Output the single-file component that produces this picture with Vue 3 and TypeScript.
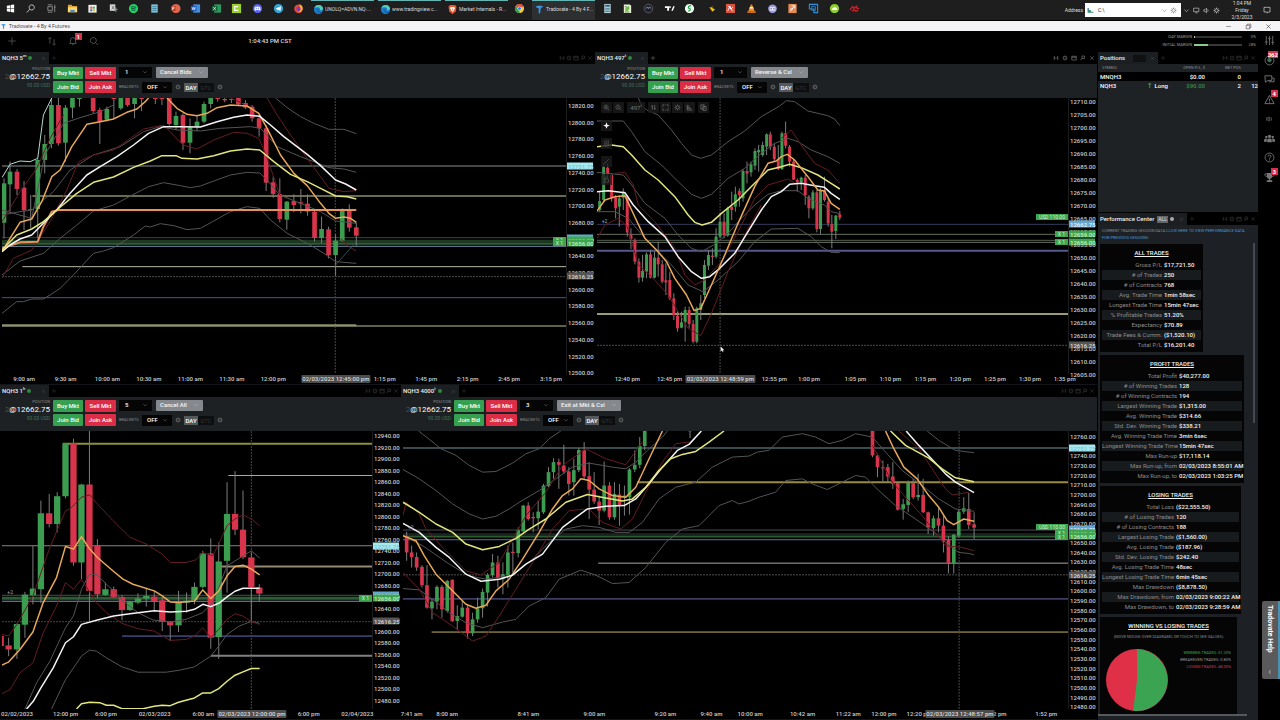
<script setup lang="ts">
import { h, ref } from 'vue'

type Shape = [d: string, fill: string, stroke?: string, width?: number]
type Candle = [x: number, high: number, top: number, bottom: number, low: number, up: number]
interface Level { y: number; from?: number; color: string; w?: number; dash?: boolean }
interface Curve { c: string; p: string }
interface Tag { y: number; text: string; kind: string }
interface Chart {
  id: string; interval: string; unit: string; qty: string; action: string; active: boolean; bright: boolean
  box: [number, number, number, number]; candleW: number
  prices: { start: number; step: number; count: number; y0: number; dy: number }
  times: [number, string][]; cross: [number, string]; tags: Tag[]; orders: Tag[]
  levels: Level[]; curves: Curve[]; candles: Candle[]; mark?: [number, number]
}

const icons: Record<string, Shape[]> = {
  start: [['M2 3l3.6-.6v3.3H2zM6.2 2.3L10 1.7v4H6.2zM2 6.4h3.6v3.3L2 9.1zM6.2 6.4H10v4l-3.8-.6z', '#fff']],
  search: [['M7.3 2a2.8 2.8 0 1 0 .1 0zM5.2 6.8L2 10.4', 'none', '#ccc', 1]],
  taskview: [['M2 4h5v4H2zM2 2h5M2 10h5M9.5 2v8M9 4.5h1.4', 'none', '#aaa', 0.8]],
  folder: [['M1 2h4l1 1.4h5V10H1z', '#e0a030'], ['M1 4.6h10V10H1z', '#ffd76a'], ['M3.5 7.5h5V10h-5z', '#4a90d0']],
  store: [['M1.5 2h9v8.5h-9z', '#eee'], ['M3.5 4h2.2v2.2H3.5z', '#e55'], ['M6.3 4h2.2v2.2H6.3z', '#4a4'], ['M3.5 6.8h2.2V9H3.5z', '#37c'], ['M6.3 6.8h2.2V9H6.3z', '#db3']],
  snip: [['M2 1.5h6v7H2z', '#ddd'], ['M4 3l3 4M7 3L4 7', 'none', '#555', 0.8], ['M7 7h3.5M8.5 5v5', 'none', '#7ab', 1]],
  spotify: [['M6 1a5 5 0 1 0 .01 0z', '#1ed760'], ['M3 4.5q3-1.2 6 .4M3.4 6.3q2.6-1 5 .4M3.8 8q2.2-.8 4 .3', 'none', '#123', 0.8]],
  notes: [['M2.5 1.5h7v9h-7z', '#7cc4dc'], ['M3.7 4h4.6M3.7 6h4.6M3.7 8h4.6', 'none', '#24607a', 0.7]],
  ppt: [['M6.5 1a5 5 0 1 0 .01 0z', '#e0654a'], ['M1 3.5h5v5H1z', '#b5391f'], ['M2.8 7.6V4.4h1q1 0 1 .9t-1 .9h-1', 'none', '#fff', 0.7]],
  word: [['M3.5 1.5H11v9H3.5z', '#3f8fe0'], ['M1 3.2h6v5.6H1z', '#1b55b0'], ['M2.2 4.5l.9 3 1-3 1 3 .8-3', 'none', '#fff', 0.7]],
  excel: [['M3.5 1.5H11v9H3.5z', '#2f9a5e'], ['M1 3.2h6v5.6H1z', '#15633a'], ['M2.6 4.5l2.6 3M5.2 4.5l-2.6 3', 'none', '#fff', 0.8]],
  camtasia: [['M1 1h10v10H1z', '#9bd32a'], ['M8 4H4v4h4', 'none', '#fff', 1.3]],
  discord: [['M6 1a5 5 0 1 0 .01 0z', '#5865f2'], ['M3.2 4.4q2.8-1 5.6 0l.6 3.2-1.6.8-.6-.8H4.8l-.6.8-1.6-.8z', '#fff'], ['M4.9 5.3v1.2M7.1 5.3v1.2', 'none', '#5865f2', 0.8]],
  telegram: [['M6 1a5 5 0 1 0 .01 0z', '#30a5dd'], ['M2.8 6L9 3.5 8 8.8 5.8 7.3 4.8 8.3 4.6 6.7z', '#fff']],
  firefox: [['M6 1.5a4.7 4.7 0 1 0 .01 0z', '#e8492a'], ['M7 1q4 1.6 3.4 6Q9 10.5 6 10.3 9 8 7.6 5z', '#ffb52e'], ['M6 4.2a2.2 2.2 0 1 0 .01 0z', '#7a3cc8']],
  edge: [['M6 1a5 5 0 1 0 .01 0z', '#1d78c8'], ['M1.4 5Q2 1.2 6 1q4.6.2 5 4.2-.2 2-3.4 2 .8-3.6-2.6-3.6Q2 3.6 1.4 5z', '#4fd0b8'], ['M5 6q-.4 3 4 3.4', 'none', '#0c4a90', 0.8]],
  brave: [['M3.2 1h5.6L10.4 3 9.6 8 6 11.2 2.4 8 1.6 3z', '#f0552b'], ['M4 3.4h4l.5 1.4L7.3 7 6 8.6 4.7 7 3.5 4.8z', '#fff'], ['M6 5v2', 'none', '#f0552b', 0.8]],
  chrome: [['M6 1a5 5 0 1 0 .01 0z', '#f2c230'], ['M6 6L1.7 3.5A5 5 0 0 1 10.3 3.5z', '#e04a3a'], ['M6 6L1.7 3.5A5 5 0 0 0 6 11z', '#2f9e50'], ['M6 3.7a2.3 2.3 0 1 0 .01 0z', '#fff'], ['M6 4.3a1.7 1.7 0 1 0 .01 0z', '#3a7be0']],
  tradovate: [['M2 2.5L6 1.5 10 2.5 8.5 4H7.5L6.5 11 5 9.5 5.2 4.5 3 4z', '#3a95e0']],
  calc: [['M2.5 1h7v10h-7z', '#b9d4dc'], ['M3.5 2h5v2h-5z', '#2a5a74'], ['M3.5 5.8h5M3.5 7.5h5M3.5 9.3h5', 'none', '#3a7088', 0.9]],
  npp: [['M2 1.5h6.5L10 3v8H2z', '#e6f0d8'], ['M3.5 8.5Q3 4 7.5 3.5 9.5 6 6 8.8z', '#6cbf3a'], ['M3 4h2M3 9.8h5', 'none', '#333', 0.7]],
  obs: [['M6 1.3a4.7 4.7 0 1 0 .01 0z', '#20202e', '#778', 0.7], ['M3.5 6a1.2 1.2 0 1 1 2.4 0 1.2 1.2 0 1 1 2.6 0', 'none', '#99a', 1]],
  tv: [['M1 3.5h4.5v5H3.5v-3H1zM6.5 3.5a1 1 0 1 0 .01 0zM8 8.5l2-5h1.7l-2 5z', '#fff']],
  spark: [['M6 1a5 5 0 1 0 .01 0z', '#f3fff5'], ['M7.5 3Q4 3.2 5 5.5 7.5 6 6.5 8.2L4.5 9', 'none', '#2ca84c', 1.4]],
  bird: [['M4.5 4.5L7 5 8 3v2.5L11 7 8 9.5 6.5 7z', '#f0c020']],
  trello: [['M1 1h10v10H1z', '#d85440'], ['M3 8.5l2.5-5 1 3 2-2M3.5 3l5 6', 'none', '#fff', 1]],
  vlc: [['M5.3 1.5h1.4L9.5 9h-7z', '#f08a24'], ['M4.3 4.3h3.4l.6 1.7H3.7z', '#fff'], ['M1.5 9h9v1.8h-9z', '#e07818']],
  bot: [['M6 1.5a4.7 4.7 0 1 0 .01 0z', '#9a9ae0'], ['M3 4.5h6v3.8H3z', '#eef'], ['M4.5 5.5v1.5M7.5 5.5v1.5', 'none', '#447', 1]],
  pdf: [['M1.5 1h9v10h-9z', '#e88a50'], ['M3.5 9L8 3.5M5 3h3.5v3M3.5 6.5h3', 'none', '#fff', 1]],
  vbox: [['M1.5 1.5h9v9h-4v-4h-5z', 'none', '#2f8fd8', 1.2], ['M4 4h4v4H4z', 'none', '#2f8fd8', 0.9]],
  cloud: [['M6 1a5 5 0 1 0 .01 0z', '#8fd02c'], ['M3.2 7.5h5.6q.8-1.500-1-2-1.500-2.500-3.200 0-1.800.2-1.400 2z', '#fff']],
  redx: [['M1 7.5L4 4l1.5 2L8 3.5l1 2.5h2M3 8.5l2.5-1 2 1.5L10 8', 'none', '#c8202c', 1.5]],
  plus: [['M6 1.5v9M1.5 6h9', 'none', 'currentColor', 0.9]],
  arrows: [['M3.5 9V2M1.7 3.8L3.5 2l1.8 1.8M8.5 4v7M6.7 9.2L8.5 11l1.8-1.8', 'none', 'currentColor', 0.9]],
  bell: [['M2 9h8L9 7.5V5a3 3 0 0 0-6 0v2.5zM5 10.5h2', 'none', 'currentColor', 1]],
  lens: [['M5.2 1.8a3.6 3.6 0 1 0 .01 0zM7.8 8l3 3', 'none', 'currentColor', 1]],
  cog: [['M6 3.2a2.8 2.8 0 1 0 .01 0zM6 1v2.2M6 8.8V11M1 6h2.2M8.8 6H11M2.5 2.5L4 4M8 8l1.5 1.5M9.5 2.5L8 4M4 8L2.500 9.500', 'none', 'currentColor', 1.2]],
  chev: [['M2.5 4.5L6 8l3.5-3.5', 'none', 'currentColor', 1]],
  close: [['M2.5 2.5l7 7M9.5 2.5l-7 7', 'none', 'currentColor', 1]],
  link: [['M2.5 2v8M9.5 2v8M2.5 6h3M6.5 6h3', 'none', 'currentColor', 1.2]],
  win: [['M1.5 2.5h9V10h-9zM1.5 4.5h9', 'none', 'currentColor', 1.2]],
  pin: [['M4 2h5v5H4zM4 7L1.5 10.5', 'none', 'currentColor', 1.2]],
  mini: [['M2 6h8', 'none', 'currentColor', 0.8]],
  restore: [['M2 4h6v6H2zM4 4V2h6v6H8', 'none', 'currentColor', 0.9]],
  sliders: [['M2.5 1v10M6 1v10M9.5 1v10M1 7.5h3M4.5 4h3M8 8h3', 'none', 'currentColor', 0.9]],
  globe: [['M6 1.2a4.8 4.8 0 1 0 .01 0z', 'none', 'currentColor', 1], ['M6 3.2a2.4 2.4 0 1 0 .01 0z', '#3a7050']],
  chat: [['M1 2h7.5v5H4L1.5 9zM5 8.5h6V4.5H9', 'none', 'currentColor', 1]],
  warn: [['M6 1.5L11 10.5H1zM6 5v3M6 8.8v.8', 'none', 'currentColor', 1]],
  ladder: [['M2.5 3.5v5M4.5 3.5H7v5H4.5zM9.5 3.5v5', 'none', 'currentColor', 1]],
  people: [['M6 2a1.7 1.7 0 1 0 .01 0zM2.5 3a1.3 1.3 0 1 0 .01 0zM9.5 3a1.3 1.3 0 1 0 .01 0zM3.5 10V7.5Q3.5 6 6 6t2.5 1.5V10zM0 9.5V7.5Q.5 6 3 6v3.5zM12 9.5V7.5Q11.5 6 9 6v3.5z', 'currentColor']],
  help: [['M6 1.2a4.8 4.8 0 1 0 .01 0zM4.4 4.8Q4.6 3.3 6 3.3t1.6 1.4Q7.6 5.6 6 6.5v.8M6 8.3v.9', 'none', 'currentColor', 1]],
  trophy: [['M3 1h6v3.5Q9 7 6.7 7.3V9H9v2H3V9h2.3V7.3Q3 7 3 4.5z', 'currentColor'], ['M3 2H1v1.5Q1.5 5 3 5M9 2h2v1.5Q10.5 5 9 5', 'none', 'currentColor', 0.9]],
  zoomin: [['M5.2 1.8a3.6 3.6 0 1 0 .01 0zM7.8 8l3 3M3.5 5.4h3.4M5.2 3.7v3.4', 'none', 'currentColor', 1]],
  zoomout: [['M5.2 1.8a3.6 3.6 0 1 0 .01 0zM7.8 8l3 3M3.5 5.4h3.4', 'none', 'currentColor', 1]],
  bars: [['M4 2v8M2 4h2M8 2v8M8 8h2', 'none', 'currentColor', 1.2]],
  frame: [['M1.5 4V1.5H4M8 1.5h2.5V4M10.5 8v2.5H8M4 10.5H1.5V8M1.5 5.5v1M10.5 5.5v1M5.5 1.5h1M5.5 10.5h1', 'none', 'currentColor', 1.2]],
  depth: [['M2 1.5v9M2 3h3M2 5.5h5M2 8h7M2 10.5h9', 'none', 'currentColor', 1.2]],
  copy: [['M1.5 1.5H7v7H1.5zM5 4h5.5v7H5z', 'none', 'currentColor', 1.2]],
  move: [['M6 .5l1.5 4 4 1.5-4 1.5-1.5 4-1.5-4-4-1.500 4-1.500z', 'currentColor']],
  page: [['M2.5 1.5h7v9h-7zM4 4h4M4 6h4M4 8h4', 'none', 'currentColor', 1]],
  line: [['M2 10l8-8', 'none', 'currentColor', 1.2]],
  lock: [['M2.5 5.5h7v5h-7zM4 5.5V3q2-2.5 4 0', 'none', 'currentColor', 1.2]],
  monitor: [['M1 2h9v6H1zM4 10h4', 'none', 'currentColor', 1]],
  sound: [['M1.5 4.5h2L6 2v8L3.5 7.5h-2zM8 4q1.500 2 0 4', 'none', 'currentColor', 1]],
  drive: [['M1 5h5l1 3h4v2H1z', '#3a8a78'], ['M1 1.5h2v4H1z', '#2a6ab0']],
  note: [['M1.5 2h9v7H8l-1.5 1.700V9h-5z', 'none', 'currentColor', 1]],
}

const Ico = (p: { n: string }) =>
  h('svg', { viewBox: '0 0 12 12', class: 'ico', 'aria-hidden': 'true' },
    (icons[p.n] ?? []).map(([d, fill, stroke, w]) =>
      h('path', { d, fill, stroke: stroke ?? 'none', 'stroke-width': w ?? 0 })))
Ico.props = ['n']

const pinned = ['start', 'search', 'taskview', 'folder', 'store', 'snip', 'spotify', 'notes', 'ppt', 'word', 'excel', 'camtasia', 'discord', 'telegram', 'firefox']
const running = ['calc', 'npp', 'obs', 'tv', 'spark', 'bird', 'trello', 'vlc', 'bot', 'pdf', 'vbox', 'cloud', 'redx']
const panelTools = ['link', 'cog', 'win', 'pin', 'close']
const chartTools = ['zoomin', 'zoomout', '', 'bars', 'frame', 'cog', 'depth', 'copy']
const sideTools = ['move', 'page', 'line', 'lock']
const rail: [string, string][] = [['sliders', ''], ['globe', '362'], ['chat', ''], ['warn', '4'], ['ladder', ''], ['people', ''], ['help', ''], ['trophy', '3']]

const cyan = { text: '12751.75', kind: 'cyan' }
const charts: Chart[] = [
  {
    id: 'a', interval: '5', unit: 'm', qty: '1', action: 'Cancel Bids', active: false, bright: false,
    box: [6, 9, 1689, 828], candleW: 14,
    prices: { start: 12820, step: 20, count: 17, y0: 30, dy: 50.1 },
    times: [[72, '9:00 am'], [196, '9:30 am'], [321, '10:00 am'], [445, '10:30 am'], [569, '11:00 am'], [693, '11:30 am'], [817, '12:00 pm'], [1150, '1:15 pm'], [1274, '1:45 pm'], [1398, '2:15 pm'], [1522, '2:45 pm'], [1647, '3:15 pm']],
    cross: [1004, '02/03/2023 12:45:00 pm'],
    tags: [{ ...cyan, y: 212 }, { y: 428, text: '12662.75', kind: 'blue' }, { y: 436, text: '12659.00', kind: 'green' }, { y: 445, text: '12656.00', kind: 'green' }, { y: 543, text: '12616.25', kind: 'gray' }],
    orders: [{ y: 436, text: 'X 1', kind: 'green' }, { y: 445, text: 'X 1', kind: 'green' }],
    levels: [
      { y: 213, color: '#8a9090' }, { y: 303, from: 97, color: '#d4d8a0' }, { y: 428, color: '#3c4448' },
      { y: 440, color: '#1c3a20', w: 4 }, { y: 447, color: '#4c8a55' }, { y: 454, color: '#7088a8' },
      { y: 515, from: 67, color: '#b8b8a8' }, { y: 545, color: '#4a4a4a', dash: true }, { y: 608, color: '#46558c' }, { y: 693, color: '#c0c488' },
    ],
    curves: [
      { c: 'dim', p: '825,9 860,38 900,65 940,85 985,103 1030,103 1067,116' },
      { c: 'dim', p: '6,540 60,498 130,475 180,430 230,390 280,348 340,330 400,298 445,275 490,263 540,272 570,278 600,273 640,258 690,240 740,232 778,234 800,255 838,300 900,325 960,350 1005,378 1067,385' },
      { c: 'dim', p: '6,655 50,620 70,620 95,612 130,612 150,600 180,580 215,545 280,475 310,468 340,458 400,420 435,393 450,396 480,386 520,392 560,404 600,400 640,378 690,350 740,335 778,340 810,375 860,415 920,445 970,475 1005,500 1067,505' },
      { c: 'dim', p: '6,360 60,350 95,345 160,290 210,225 280,180 360,155 430,110 480,95 530,105 600,108 660,100 750,95 780,100 830,155 900,185 940,200 985,218 1030,222 1067,232' },
      { c: 'dim', p: '6,345 40,355 95,370 134,180 190,85 240,68 300,50 340,30' },
      { c: 'red', p: '6,550 40,490 95,465 150,380 200,285 235,200 280,180 340,165 430,102 490,90 548,150 590,162 640,135 700,112 740,115 775,130 797,180 838,300' },
      { c: 'red', p: '6,380 60,290 110,220 150,130 190,60' },
      { c: 'red', p: '800,9 830,60 870,120 920,190 960,245 985,280 1030,290 1067,287' },
      { c: 'red', p: '690,9 720,22 760,45' }, { c: 'red', p: '1020,430 1045,455 1067,468' },
      { c: 'teal', p: '1005,510 1067,440' },
      { c: 'ice', p: '6,248 30,208 60,198 90,200 113,190 130,60 155,9' },
      { c: 'coral', p: '6,460 60,442 113,440 130,395 155,350 175,345 1067,345' },
      { c: 'olive', p: '6,691 1067,691' },
      { c: 'orange', p: '6,470 30,430 60,382 95,372 125,320 155,245 180,225 215,155 260,88 300,80 340,72 380,52 410,42 435,20 445,9' },
      { c: 'orange', p: '500,9 530,40 560,58 590,62 620,55 650,38 690,30 740,33 775,55 800,100 840,180 880,235 920,272 960,325 985,355 1005,370 1030,366 1050,370 1067,382' },
      { c: 'white', p: '6,470 30,450 60,432 95,420 130,385 170,345 210,295 260,240 300,215 350,185 400,150 445,115 490,95 540,95 600,96 650,80 700,67 740,60 778,64 810,90 850,125 920,178 960,212 1005,255 1035,267 1067,285' },
      { c: 'yellow', p: '6,465 50,420 95,402 130,380 170,345 230,295 280,262 340,246 400,217 450,198 485,182 527,182 545,190 590,192 640,182 690,168 740,162 778,165 820,200 870,238 920,260 960,280 1005,303 1040,305 1067,312' },
    ],
    candles: [
      [12, 250, 265, 383, 430, 1], [30, 200, 230, 268, 350, 1], [51, 222, 230, 282, 300, 0], [72, 258, 278, 346, 405, 0], [92, 300, 342, 345, 400, 0], [113, 190, 195, 342, 430, 1], [134, 120, 147, 195, 235, 1], [154, 9, 30, 147, 160, 1], [175, 9, 30, 145, 152, 0], [196, 30, 38, 143, 200, 1], [217, 9, 9, 38, 70, 1], [238, 9, 9, 12, 35, 1],
      [279, 9, 9, 48, 55, 0], [299, 38, 45, 80, 147, 0], [320, 35, 42, 74, 80, 1], [341, 9, 9, 12, 70, 0], [362, 9, 9, 40, 45, 1], [382, 9, 9, 30, 35, 0], [403, 9, 9, 27, 70, 1], [424, 9, 9, 12, 48, 0], [465, 9, 9, 12, 27, 0], [485, 9, 9, 12, 30, 0], [507, 9, 9, 87, 92, 0], [527, 50, 63, 90, 105, 1], [548, 55, 60, 143, 165, 0], [569, 70, 97, 143, 175, 1], [590, 60, 80, 95, 108, 1], [611, 20, 27, 80, 85, 1], [631, 9, 9, 27, 40, 1],
      [652, 9, 9, 12, 20, 0], [673, 9, 12, 16, 22, 0], [693, 9, 12, 15, 24, 0], [714, 9, 9, 28, 32, 0], [735, 15, 24, 38, 42, 0], [755, 30, 35, 70, 80, 0], [776, 60, 70, 100, 125, 0], [797, 90, 100, 263, 288, 0], [818, 245, 262, 297, 308, 0], [838, 250, 297, 372, 382, 0], [859, 318, 320, 374, 404, 1], [880, 298, 318, 330, 352, 0], [901, 282, 322, 326, 355, 0], [921, 298, 326, 350, 362, 0], [942, 345, 350, 429, 440, 0], [963, 365, 402, 429, 445, 1], [984, 395, 403, 480, 490, 0], [1005, 418, 437, 480, 542, 1], [1025, 340, 345, 437, 440, 1], [1046, 328, 345, 398, 410, 0], [1067, 383, 397, 422, 452, 0],
    ],
  },
  {
    id: 'b', interval: '497', unit: 't', qty: '1', action: 'Reverse & Cxl', active: true, bright: true,
    box: [6, 9, 1416, 828], candleW: 9,
    prices: { start: 12710, step: 5, count: 22, y0: 17, dy: 39 },
    times: [[97, '12:40 pm'], [224, '12:45 pm'], [538, '12:55 pm'], [642, '1:00 pm'], [781, '1:05 pm'], [886, '1:10 pm'], [991, '1:15 pm'], [1096, '1:20 pm'], [1200, '1:25 pm'], [1305, '1:30 pm'], [1409, '1:35 pm']],
    cross: [376, '02/03/2023 12:48:59 pm'],
    tags: [{ y: 387, text: '12662.75', kind: 'blue' }, { y: 417, text: '12659.00', kind: 'green' }, { y: 440, text: '12656.00', kind: 'green' }, { y: 750, text: '12616.25', kind: 'gray' }],
    orders: [{ y: 366, text: 'USD 110.00', kind: 'green' }, { y: 417, text: 'X 1', kind: 'green' }, { y: 440, text: 'X 1', kind: 'green' }],
    levels: [
      { y: 388, color: '#343c5c' }, { y: 418, color: '#666e60' }, { y: 436, color: '#566050' }, { y: 442, color: '#6a7464' },
      { y: 467, color: '#54588c', w: 2 }, { y: 657, color: '#9c9c74', w: 2 }, { y: 751, color: '#4a4a4a', dash: true },
    ],
    curves: [
      { c: 'dim', p: '130,9 140,30 155,45 190,60 230,105 260,145 290,180 318,190 350,180 400,140 450,108 500,65 555,33 575,17 600,20 640,48 700,62 720,72 736,92' },
      { c: 'dim', p: '6,78 85,78 110,110 150,170 200,210 250,260 290,298 320,310 350,298 400,250 450,220 500,175 540,145 580,130 610,140 650,165 700,185 736,205' },
      { c: 'dim', p: '6,232 85,240 110,270 150,325 210,370 250,420 290,460 320,470 360,448 400,415 440,370 480,330 520,298 560,287 610,287 640,310 690,330 710,350 736,356' },
      { c: 'dim', p: '6,350 60,350 100,370 150,430 230,510 280,570 325,590 370,555 430,500 480,440 530,402 610,400 650,425 680,455 710,472 736,473' },
      { c: 'red', p: '60,235 90,232 115,270 130,330 180,380 240,460 270,540 300,570 330,555 380,500 430,410 480,310 520,270 580,252 610,270' },
      { c: 'red', p: '6,430 30,390 70,370 97,395 130,510 170,545 220,600 280,700 318,722 350,655 400,530 450,420 500,330' },
      { c: 'red', p: '560,130 590,105 620,150 660,205 700,225 736,265' },
      { c: 'yellow', p: '6,155 50,150 85,155 110,180 150,225 190,255 240,305 280,360 300,382 322,390 350,382 380,355 430,315 480,265 520,225 560,215 585,208 620,218 670,240 705,262 736,282' },
      { c: 'white', p: '6,290 40,287 90,293 115,330 160,380 210,425 250,485 290,530 320,550 345,545 375,520 420,475 460,410 500,345 530,305 560,290 585,268 620,265 660,272 690,277 710,295 736,313' },
      { c: 'orange', p: '6,348 30,315 60,305 90,302 110,345 150,430 185,465 215,500 240,550 275,600 298,647 318,640 350,570 390,480 430,385 480,275 520,205 545,198 560,185 578,178 600,195 640,245 670,285 690,288 710,325 736,343' },
    ],
    candles: [
      [14, 290, 318, 345, 350, 1], [26, 205, 215, 315, 320, 1], [38, 205, 218, 235, 250, 0], [50, 235, 240, 310, 320, 0], [62, 300, 308, 340, 370, 0], [73, 300, 310, 335, 395, 1], [85, 280, 290, 308, 345, 1], [97, 300, 305, 412, 425, 0], [108, 400, 418, 432, 462, 0], [120, 430, 436, 500, 508, 0], [132, 490, 500, 548, 563, 0], [143, 480, 528, 548, 560, 1], [155, 472, 478, 530, 550, 1], [167, 465, 478, 548, 550, 0], [179, 470, 488, 548, 550, 1], [190, 440, 488, 508, 545, 0], [202, 495, 508, 560, 565, 0], [213, 505, 556, 562, 600, 0], [225, 530, 555, 610, 615, 0],
      [237, 595, 610, 660, 675, 0], [248, 650, 662, 700, 710, 0], [260, 650, 682, 698, 700, 1], [271, 635, 645, 682, 740, 1], [283, 635, 645, 687, 700, 0], [295, 675, 687, 740, 745, 0], [306, 635, 640, 740, 745, 1], [318, 600, 625, 645, 675, 1], [329, 495, 510, 600, 610, 1], [341, 465, 480, 512, 525, 1], [353, 460, 482, 486, 510, 0], [364, 400, 425, 485, 490, 1], [376, 355, 380, 425, 430, 1], [388, 355, 380, 420, 430, 0], [399, 335, 340, 422, 425, 1], [411, 290, 335, 345, 375, 0], [422, 275, 298, 335, 350, 1], [434, 280, 288, 300, 335, 0], [445, 222, 228, 310, 320, 1], [457, 200, 228, 236, 265, 0], [469, 200, 208, 232, 245, 1],
      [481, 160, 168, 212, 225, 1], [492, 150, 165, 172, 230, 1], [504, 140, 150, 180, 185, 1], [516, 115, 118, 155, 180, 1], [527, 110, 118, 155, 165, 0], [539, 145, 155, 192, 200, 0], [551, 150, 192, 222, 225, 0], [562, 110, 115, 222, 225, 1], [573, 80, 115, 152, 160, 0], [585, 150, 155, 200, 215, 0], [597, 190, 200, 254, 255, 0], [608, 250, 255, 262, 290, 0], [620, 245, 248, 262, 285, 1], [632, 240, 248, 300, 330, 0], [643, 300, 305, 340, 370, 0], [655, 285, 292, 340, 345, 1], [667, 285, 292, 402, 412, 0], [678, 280, 288, 402, 418, 1], [690, 245, 285, 315, 320, 0], [701, 310, 320, 385, 395, 0], [712, 360, 388, 410, 460, 0], [724, 360, 362, 408, 432, 1], [736, 348, 358, 368, 375, 0],
    ],
    mark: [20, 378],
  },
  {
    id: 'c', interval: '1', unit: 'h', qty: '5', action: 'Cancel All', active: false, bright: false,
    box: [6, 147, 1113, 831], candleW: 19,
    prices: { start: 12940, step: 20, count: 24, y0: 160, dy: 34.35 },
    times: [[51, '02/02/2023'], [197, '12:00 pm'], [318, '6:00 pm'], [464, '02/03/2023'], [610, '6:00 am'], [926, '6:00 pm'], [1072, '02/04/2023']],
    cross: [756, '02/03/2023 12:00:00 pm'],
    tags: [{ ...cyan, y: 490 }, { y: 636, text: '12662.75', kind: 'blue' }, { y: 647, text: '12656.00', kind: 'green' }, { y: 716, text: '12616.25', kind: 'gray' }],
    orders: [{ y: 647, text: 'X 1', kind: 'green' }],
    levels: [
      { y: 185, from: 190, color: '#8c9038', w: 2 }, { y: 280, from: 687, color: '#a8a8a8' }, { y: 490, color: '#808888' }, { y: 552, from: 665, color: '#948a78', w: 2 },
      { y: 638, color: '#3a5a50' }, { y: 647, color: '#2c5c34', w: 3 }, { y: 656, color: '#7890a8' }, { y: 717, color: '#444', dash: true }, { y: 760, from: 367, color: '#6070b8' }, { y: 819, from: 634, color: '#808080', w: 2 },
    ],
    curves: [
      { c: 'dim', p: '155,978 197,890 245,820 269,802 290,805 320,825 367,852 415,868 500,868 540,862 585,852 634,820 658,790 683,755 720,730 756,716 781,722' },
      { c: 'dim', p: '75,978 110,900 150,835 197,735 221,700 245,620 269,575 290,575 320,605 342,625 370,655 415,690 460,712 512,718 560,710 610,690 640,660 683,550 756,505 781,527' },
      { c: 'red', p: '6,755 26,760 51,725 99,640 150,495 197,385 210,380 245,345 270,338 290,362 340,415 391,465 440,485 488,515 512,540 560,540 590,532 610,510 640,520 660,480 683,430 707,410 731,398 756,410 781,430' },
      { c: 'red', p: '6,932 30,920 60,870 99,840 130,750 170,670 197,600 221,620 245,590 290,660 320,690 367,722 415,738 464,745 512,773 560,770 585,760 610,735 634,765 658,740 683,710 707,693 731,700 756,717 781,725' },
      { c: 'orange', p: '6,847 25,838 60,800 99,748 130,660 170,585 197,492 221,500 245,463 270,500 293,525 342,567 370,590 400,605 464,625 488,640 512,658 537,660 585,655 610,622 634,648 658,625 683,580 707,552 731,548 756,560 781,577' },
      { c: 'white', p: '80,978 100,955 123,915 160,855 197,780 221,762 245,725 293,712 342,700 391,693 464,684 512,688 561,686 585,680 610,665 634,672 658,662 683,643 707,626 731,617 781,617' },
      { c: 'yellow', p: '230,978 245,962 270,958 300,959 320,967 342,967 367,977 430,977 464,970 488,967 512,968 537,958 585,945 610,930 634,930 658,917 683,895 707,877 731,867 756,857 781,857' },
    ],
    candles: [
      [2, 755, 760, 790, 795, 0], [26, 765, 788, 800, 820, 0], [51, 722, 724, 800, 828, 1], [75, 628, 636, 726, 765, 1], [99, 490, 618, 638, 665, 1], [123, 355, 393, 620, 662, 1], [148, 335, 393, 425, 435, 0], [172, 330, 342, 425, 450, 1], [197, 183, 183, 342, 348, 1], [221, 170, 183, 540, 550, 0], [245, 305, 307, 540, 590, 1], [269, 147, 307, 625, 715, 0], [293, 470, 490, 635, 645, 0], [317, 600, 620, 637, 640, 1], [342, 612, 620, 643, 645, 0], [367, 637, 643, 682, 713, 0],
      [391, 655, 657, 682, 685, 1], [415, 632, 648, 660, 665, 1], [440, 615, 640, 648, 672, 1], [464, 625, 642, 655, 685, 0], [488, 645, 653, 718, 745, 0], [512, 715, 717, 728, 775, 0], [537, 625, 655, 728, 748, 1], [561, 630, 654, 660, 690, 1], [585, 600, 613, 653, 665, 1], [610, 505, 513, 613, 618, 1], [634, 468, 513, 765, 798, 0], [658, 480, 537, 763, 828, 1], [683, 300, 395, 535, 630, 1], [707, 267, 395, 442, 458, 0], [731, 325, 442, 524, 530, 0], [756, 510, 525, 613, 720, 0], [780, 605, 615, 633, 655, 0],
    ],
    mark: [22, 628],
  },
  {
    id: 'd', interval: '4000', unit: 't', qty: '3', action: 'Exit at Mkt & Cxl', active: true, bright: false,
    box: [11, 147, 1997, 831], candleW: 11,
    prices: { start: 12760, step: 10, count: 29, y0: 162, dy: 28.85 },
    times: [[37, '7:41 am'], [143, '8:00 am'], [387, '8:41 am'], [585, '9:00 am'], [798, '9:20 am'], [936, '9:40 am'], [1052, '10:00 am'], [1209, '10:42 am'], [1346, '11:22 am'], [1453, '12:00 pm'], [1559, '12:20 pm'], [1788, '1:12 pm'], [1940, '1:52 pm']],
    cross: [1681, '02/03/2023 12:48:57 pm'],
    tags: [{ ...cyan, y: 198 }, { y: 441, text: '12662.75', kind: 'blue' }, { y: 452, text: '12659.00', kind: 'green' }, { y: 462, text: '12656.00', kind: 'green' }, { y: 577, text: '12616.25', kind: 'gray' }],
    orders: [{ y: 435, text: 'USD 110.00', kind: 'green' }, { y: 452, text: 'X 1', kind: 'green' }, { y: 463, text: 'X 1', kind: 'green' }],
    levels: [
      { y: 198, color: '#384c50', w: 2 }, { y: 300, from: 0, color: 'none' }, { y: 300, from: 715, color: '#988c40', w: 2 }, { y: 443, color: '#4c4c54' }, { y: 455, color: '#30403a' }, { y: 462, color: '#2c5a30', w: 2 }, { y: 472, color: '#4a78b0' },
      { y: 542, from: 597, color: '#a8a8a0' }, { y: 577, color: '#505050', dash: true }, { y: 649, color: '#6c6cb0' }, { y: 748, from: 97, color: '#c4b458' },
    ],
    curves: [
      { c: 'dim', p: '58,147 90,172 125,200 170,220 210,250 250,270 290,268 340,243 380,215 420,200 450,170 485,147' },
      { c: 'dim', p: '11,262 60,290 110,325 160,365 210,395 250,410 290,402 330,380 360,360 420,325 470,290 520,255 570,243 640,255 680,260 710,240 745,205 790,165 805,147' },
      { c: 'dim', p: '11,618 60,622 100,650 150,690 200,720 250,735 310,718 350,710 390,670 440,645 480,590 545,563 590,578 640,603 690,600 740,555 800,480 850,440 900,430 960,370 1000,355 1020,365 1050,357 1080,345 1130,330 1160,295 1210,290 1240,305 1285,322 1330,300 1370,280 1400,285 1440,325 1490,370 1550,410 1600,445 1640,480 1680,510 1710,513 1726,517' },
      { c: 'dim', p: '11,460 70,490 150,545 210,580 260,590 340,578 400,530 450,480 500,440 550,430 600,435 650,450 690,450 730,420 780,350 830,315 890,300 940,255 1000,225 1050,222 1075,210 1110,205 1150,165 1210,155 1250,165 1290,185 1330,175 1370,155 1420,165 1460,210 1510,265 1570,310 1620,350 1670,380 1726,387' },
      { c: 'dim', p: '1585,147 1620,175 1670,205 1726,212' },
      { c: 'red', p: '11,400 20,360 60,395 80,440 130,495 200,565 245,577 300,540 340,470 380,400 440,330 490,250 560,200 620,230 680,248 730,180' },
      { c: 'red', p: '11,570 60,620 100,690 160,730 220,775 260,760 300,700 350,620 400,540 460,440 510,385 570,380 610,420 665,440 700,410 740,330 790,240 830,185 870,180' },
      { c: 'red', p: '1500,147 1560,200 1600,260 1640,320 1660,338 1710,330' },
      { c: 'red', p: '1421,190 1480,300 1570,400 1640,490 1690,495 1726,505' },
      { c: 'orange', p: '11,460 50,475 75,520 110,575 150,615 200,665 230,677 260,668 290,625 330,590 370,530 420,450 460,380 490,340 520,320 545,290 570,295 600,320 640,340 680,345 710,315 750,230 790,147' },
      { c: 'orange', p: '1460,147 1485,200 1515,255 1555,290 1590,340 1620,375 1645,415 1665,427 1695,410 1726,417' },
      { c: 'white', p: '11,423 60,450 110,495 150,525 200,575 245,596 300,590 340,578 380,545 430,515 490,435 530,405 565,380 620,372 675,370 710,350 750,305 790,255 835,205 870,187 907,147' },
      { c: 'white', p: '1522,147 1560,190 1600,232 1640,275 1670,300 1726,331' },
      { c: 'yellow', p: '11,360 60,390 110,425 160,450 200,485 250,502 300,492 350,468 390,440 440,410 500,360 565,337 620,347 670,356 700,350 740,315 775,270 815,230 850,217 890,208 930,180 975,147' },
      { c: 'yellow', p: '1475,147 1520,190 1590,228 1630,260 1670,287 1726,299' },
    ],
    candles: [
      [22, 448, 462, 510, 535, 0], [37, 490, 510, 524, 555, 0], [52, 510, 524, 555, 565, 0], [68, 548, 553, 608, 615, 0], [83, 548, 608, 675, 678, 0], [98, 650, 657, 677, 710, 1], [113, 608, 613, 657, 680, 1], [128, 608, 613, 680, 705, 0], [144, 592, 595, 685, 690, 1], [159, 590, 592, 715, 718, 0], [174, 668, 700, 715, 742, 1], [189, 655, 675, 702, 705, 1], [205, 668, 675, 752, 768, 0], [220, 690, 710, 752, 760, 1], [235, 645, 677, 710, 720, 1], [250, 618, 628, 677, 705, 1], [265, 572, 577, 630, 672, 1], [280, 515, 540, 578, 585, 1], [296, 520, 540, 585, 615, 0], [311, 540, 575, 590, 635, 1],
      [326, 490, 510, 577, 615, 1], [341, 480, 508, 512, 570, 0], [357, 435, 443, 512, 525, 1], [372, 368, 370, 447, 450, 1], [387, 360, 370, 410, 415, 0], [402, 390, 404, 408, 450, 0], [417, 355, 388, 408, 440, 1], [433, 305, 310, 390, 395, 1], [448, 255, 270, 312, 315, 1], [463, 228, 240, 270, 290, 1], [479, 230, 240, 248, 320, 0], [494, 188, 250, 268, 275, 0], [509, 255, 268, 305, 340, 0], [524, 230, 264, 300, 340, 1], [539, 198, 204, 264, 270, 1], [555, 180, 204, 283, 290, 0], [570, 240, 282, 322, 410, 0], [585, 270, 322, 358, 365, 0], [600, 340, 358, 385, 428, 0], [615, 238, 310, 385, 390, 1],
      [631, 300, 310, 405, 412, 0], [646, 300, 335, 405, 412, 1], [661, 305, 337, 370, 430, 0], [676, 310, 340, 345, 400, 1], [691, 258, 262, 345, 397, 1], [707, 205, 248, 262, 270, 1], [722, 165, 192, 248, 258, 1], [737, 147, 147, 192, 205, 1], [873, 147, 147, 148, 168, 0], [1421, 147, 147, 220, 225, 0], [1436, 215, 220, 255, 285, 0], [1452, 235, 256, 259, 300, 0], [1467, 245, 255, 283, 300, 0], [1482, 240, 283, 305, 320, 0], [1497, 300, 303, 382, 385, 0], [1513, 350, 366, 380, 412, 1], [1528, 295, 302, 368, 390, 1], [1543, 290, 303, 345, 350, 0], [1558, 275, 338, 345, 355, 1], [1573, 290, 338, 390, 392, 0],
      [1588, 388, 390, 435, 455, 0], [1604, 400, 408, 437, 460, 1], [1619, 375, 408, 430, 450, 0], [1634, 400, 430, 475, 510, 0], [1649, 462, 470, 542, 573, 0], [1665, 455, 457, 542, 573, 1], [1680, 380, 388, 460, 465, 1], [1695, 345, 378, 388, 395, 1], [1710, 332, 380, 428, 440, 0], [1726, 390, 426, 436, 470, 0],
    ],
    mark: [26, 433],
  },
]

const rows = [charts.slice(0, 2), charts.slice(2)]
const quantities = ref(charts.map(c => c.qty))
const topOf = (c: Chart, y: number) => ({ top: `${((y - c.box[1]) / c.box[3]) * 100}%` })
const leftOf = (c: Chart, x: number) => ({ left: `${((x - c.box[0]) / c.box[2]) * 100}%` })
const spot = (c: Chart, x: number, y: number) => ({ ...leftOf(c, x), ...topOf(c, y) })

const reports = [
  { id: 'all', title: 'ALL TRADES', rows: [['Gross P/L', '$17,721.50'], ['# of Trades', '250'], ['# of Contracts', '768'], ['Avg. Trade Time', '1min 58sec'], ['Longest Trade Time', '15min 47sec'], ['% Profitable Trades', '51.20%'], ['Expectancy', '$70.89'], ['Trade Fees & Comm.', '($1,520.10)'], ['Total P/L', '$16,201.40']] },
  { id: 'profit', title: 'PROFIT TRADES', rows: [['Total Profit', '$40,277.00'], ['# of Winning Trades', '128'], ['# of Winning Contracts', '194'], ['Largest Winning Trade', '$1,315.00'], ['Avg. Winning Trade', '$314.66'], ['Std. Dev. Winning Trade', '$338.21'], ['Avg. Winning Trade Time', '3min 6sec'], ['Longest Winning Trade Time', '15min 47sec'], ['Max Run-up', '$17,118.14'], ['Max Run-up, from', '02/03/2023 8:55:01 AM'], ['Max Run-up, to', '02/03/2023 1:03:25 PM']] },
  { id: 'losing', title: 'LOSING TRADES', rows: [['Total Loss', '($22,555.50)'], ['# of Losing Trades', '120'], ['# of Losing Contracts', '188'], ['Largest Losing Trade', '($1,560.00)'], ['Avg. Losing Trade', '($187.96)'], ['Std. Dev. Losing Trade', '$242.40'], ['Avg. Losing Trade Time', '48sec'], ['Longest Losing Trade Time', '6min 45sec'], ['Max Drawdown', '($8,878.50)'], ['Max Drawdown, from', '02/03/2023 9:00:22 AM'], ['Max Drawdown, to', '02/03/2023 9:28:59 AM']] },
]
</script>

<template>
  <div class="desktop">
    <nav class="taskbar">
      <div class="pinned"><button v-for="n in pinned" :key="n" :aria-label="n"><Ico :n="n" /></button></div>
      <button class="task"><Ico n="edge" /><span>UNOLQ=ADVN.NQ-...</span></button>
      <button class="task"><Ico n="edge" /><span>www.tradingview.c...</span></button>
      <button class="task"><Ico n="brave" /><span>Market Internals - R...</span></button>
      <button class="solo" aria-label="chrome"><Ico n="chrome" /></button>
      <button class="task current"><Ico n="tradovate" /><span>Tradovate - 4 By 4 F...</span></button>
      <div class="running"><button v-for="n in running" :key="n" :aria-label="n"><Ico :n="n" /></button></div>
      <label class="address">Address
        <span class="address-box"><Ico n="drive" /><input value="C:\" aria-label="Address"><Ico n="chev" /><Ico n="cog" /></span>
      </label>
      <div class="tray"><Ico n="chev" /><Ico n="monitor" /><Ico n="sound" /><Ico n="cog" /></div>
      <div class="tray-clock">1:04 PM<br>Friday<br>2/3/2023</div>
      <button class="tray-note" aria-label="Notifications"><Ico n="note" /></button>
    </nav>

    <header class="titlebar">
      <Ico n="tradovate" /><span>Tradovate - 4 By 4 Futures</span>
      <div class="controls">
        <button aria-label="Minimize"><Ico n="mini" /></button>
        <button aria-label="Restore"><Ico n="restore" /></button>
        <button aria-label="Close"><Ico n="close" /></button>
      </div>
    </header>

    <div class="app">
      <div class="content">
        <div class="toolbar">
          <button class="tool first" aria-label="Add"><Ico n="plus" /></button>
          <button class="tool" aria-label="Orders"><Ico n="arrows" /></button>
          <button class="tool" aria-label="Alerts"><Ico n="bell" /><b class="badge">1</b></button>
          <button class="tool" aria-label="Search"><Ico n="lens" /></button>
          <time class="clock">1:04:43 PM CST</time>
          <div class="margins">
            <span>DAY MARGIN</span><i class="meter low"></i><span>0%</span>
            <span>INITIAL MARGIN</span><i class="meter"></i><span>28%</span>
          </div>
        </div>

        <div class="workspace">
          <main class="charts">
            <div v-for="(pair, r) in rows" :key="r" class="chart-row" :class="'row' + r">
              <section v-for="c in pair" :key="c.id" class="chart" :class="'chart-' + c.id">
                <div class="tabs" :class="{ bright: c.bright }">
                  <div class="tab"><b>NQH3 {{ c.interval }}<sup>{{ c.unit }}</sup></b><i class="dot"></i><Ico n="close" /></div>
                  <Ico n="plus" class="tab-add" />
                  <div class="tab-tools"><Ico v-for="t in panelTools" :key="t" :n="t" /></div>
                </div>
                <div class="ticket">
                  <div class="position"><small>POSITION</small><strong><i>2</i>@12662.75</strong><em>90.00 USD</em></div>
                  <div class="orders">
                    <button class="buy">Buy Mkt</button><button class="sell">Sell Mkt</button>
                    <button class="buy">Join Bid</button><button class="sell">Join Ask</button>
                  </div>
                  <div class="options">
                    <div class="opt-row">
                      <label class="qty"><input v-model="quantities[charts.indexOf(c)]" aria-label="Quantity"><Ico n="chev" /></label>
                      <button class="action"><span>{{ c.action }}</span><Ico n="chev" /></button>
                    </div>
                    <div class="opt-row second">
                      <label :for="'bracket-' + c.id" class="bracket-label">BRACKETS</label>
                      <span class="bracket"><select :id="'bracket-' + c.id"><option>OFF</option><option>ON</option></select><Ico n="chev" /></span>
                      <Ico n="cog" class="gear" />
                      <span class="tif"><button class="on">DAY</button><button>GTC</button></span>
                      <Ico n="cog" class="gear" />
                    </div>
                  </div>
                </div>
                <div class="plot-area">
                  <div class="plot">
                    <svg :viewBox="c.box.join(' ')" preserveAspectRatio="none" class="canvas">
                      <line v-for="(l, i) in c.levels" :key="'l' + i" :x1="l.from ?? c.box[0]" :x2="c.box[0] + c.box[2]" :y1="l.y" :y2="l.y" :stroke="l.color" :stroke-width="l.w ?? 1" :class="{ dash: l.dash }" />
                      <line :x1="c.cross[0]" :x2="c.cross[0]" :y1="c.box[1]" :y2="c.box[1] + c.box[3]" stroke="#484848" class="dash" />
                      <g v-for="(k, i) in c.candles" :key="i" :class="k[5] ? 'up' : 'down'">
                        <line :x1="k[0]" :x2="k[0]" :y1="k[1]" :y2="k[4]" />
                        <rect :x="k[0] - c.candleW / 2" :y="k[2]" :width="c.candleW" :height="k[3] - k[2]" />
                      </g>
                      <polyline v-for="(v, i) in c.curves" :key="'c' + i" :points="v.p" :class="'cv ' + v.c" />
                    </svg>
                    <span v-if="c.mark" class="mark" :style="spot(c, c.mark[0], c.mark[1])">+2</span>
                    <span v-for="(o, i) in c.orders" :key="'o' + i" class="order-tag" :style="topOf(c, o.y)">{{ o.text }}</span>
                    <template v-if="c.id === 'b'">
                      <div class="chart-tools"><button v-for="(t, i) in chartTools" :key="i" :class="{ wide: !t }" :aria-label="t || 'interval'"><Ico v-if="t" :n="t" /><template v-else>497<sup>t</sup></template></button></div>
                      <div class="side-tools"><button v-for="t in sideTools" :key="t" :class="t" :aria-label="t"><Ico :n="t" /></button></div>
                      <svg class="cursor" viewBox="0 0 8 10" :style="spot(c, 375, 752)"><path d="M1 0v8l2-1.500 1.500 3 1-.5-1.200-3H7z" fill="#eee" /></svg>
                    </template>
                  </div>
                  <div class="price-axis">
                    <span v-for="i in c.prices.count" :key="i" class="price" :style="topOf(c, c.prices.y0 + (i - 1) * c.prices.dy)">{{ c.prices.start - (i - 1) * c.prices.step }}.00</span>
                    <span v-for="(t, i) in c.tags" :key="'t' + i" class="price tag" :class="t.kind" :style="topOf(c, t.y)">{{ t.text }}</span>
                  </div>
                </div>
                <div class="time-axis">
                  <div class="times">
                    <span v-for="(t, i) in c.times" :key="i" :style="leftOf(c, t[0])">{{ t[1] }}</span>
                    <span class="time-tag" :style="leftOf(c, c.cross[0])">{{ c.cross[1] }}</span>
                  </div>
                </div>
              </section>
            </div>
          </main>

          <aside class="side">
            <section class="positions">
              <div class="tabs"><div class="tab"><b>Positions</b><span class="chip"></span><Ico n="close" /></div><Ico n="plus" class="tab-add" /><div class="tab-tools"><Ico v-for="t in panelTools" :key="t" :n="t" /></div></div>
              <table>
                <thead><tr><th>SYMBOL</th><th></th><th>OPEN P/L, $</th><th>NET POS</th><th></th></tr></thead>
                <tbody>
                  <tr class="black"><td>MNQH3</td><td></td><td>$0.00</td><td>0</td><td></td></tr>
                  <tr><td>NQH3</td><td><i>↑</i>Long</td><td class="gain">$90.00</td><td>2</td><td>12</td></tr>
                </tbody>
              </table>
            </section>
            <section class="performance">
              <div class="tabs"><div class="tab"><b>Performance Center</b><span class="chip on">ALL</span><i class="dot"></i><Ico n="close" /></div><Ico n="plus" class="tab-add" /><div class="tab-tools"><Ico v-for="t in panelTools" :key="t" :n="t" /></div></div>
              <p class="session">CURRENT TRADING SESSION DATA <a href="#">CLICK HERE TO VIEW PERFORMANCE DATA FOR PREVIOUS SESSIONS</a></p>
              <div class="cards">
                <article v-for="p in reports" :key="p.id" class="card" :class="p.id">
                  <h3>{{ p.title }}</h3>
                  <table><tbody><tr v-for="row in p.rows" :key="row[0]"><th scope="row">{{ row[0] }}</th><td>{{ row[1] }}</td></tr></tbody></table>
                </article>
                <article class="card versus">
                  <h3>WINNING VS LOSING TRADES</h3>
                  <p class="hint">(MOVE MOUSE OVER DIAGRAMS OR TOUCH TO SEE VALUES)</p>
                  <div class="share">
                    <svg viewBox="0 0 64 64" class="pie"><circle cx="32" cy="32" r="32" fill="#e03048" /><path d="M32 32V0a32 32 0 1 1-4 63.800z" fill="#3aa452" /></svg>
                    <ul><li class="win">WINNING TRADES: 51.20%</li><li>BREAKEVEN TRADES: 0.80%</li><li class="lose">LOSING TRADES: 48.00%</li></ul>
                  </div>
                </article>
                <i class="scroll-x"></i>
                <i class="scroll-y"></i>
              </div>
            </section>
          </aside>
        </div>
      </div>

      <nav class="rail">
        <div class="rail-items"><button v-for="[n, b] in rail" :key="n" :aria-label="n" :class="n"><Ico :n="n" /><b v-if="b" class="badge">{{ b }}</b></button></div>
        <button class="help-tab"><span>Tradovate Help</span><Ico n="chev" /></button>
      </nav>
    </div>
  </div>
</template>

<style>
html, body { background: #000; }
body { margin: 0; }
</style>

<style scoped>
.desktop { display: flex; flex-direction: column; height: 100vh; min-height: 720px; box-sizing: border-box; overflow: hidden; background: #000; color: #e6e6e6; font: 6px/8px Roboto, "Liberation Sans", sans-serif; }
.desktop * { box-sizing: border-box; }
button, input, select { font: inherit; color: inherit; border: 0; padding: 0; margin: 0; background: none; outline: 0; }
button { cursor: pointer; }
.ico { display: block; flex: none; width: 8px; height: 8px; }

.taskbar { flex: none; display: flex; height: 20px; background: #1e1e1f; color: #ddd; font-size: 5px; }
.pinned, .running { display: flex; align-items: center; flex: none; width: 309px; padding-bottom: 3px; }
.running { width: 268px; padding-bottom: 4px; }
.pinned button, .running button { flex: 1; display: grid; place-items: center; }
.taskbar .ico { width: 11px; height: 11px; }
.task { flex: none; display: flex; align-items: center; gap: 1px; width: 63px; margin: 0 2px; padding: 0 0 3px 2px; border-top: 1px solid #66b5b5; overflow: hidden; white-space: nowrap; }
.task span { flex: 1; text-align: left; overflow: hidden; }
.task.current { background: #2e2f30; }
.solo { flex: none; width: 20px; padding: 0 4px 3px; }
.address { margin-left: auto; display: flex; align-items: center; gap: 2px; }
.address-box { display: flex; align-items: center; width: 96px; height: 14px; padding: 0 2px; background: #fff; color: #777; }
.address-box input { flex: 1; min-width: 0; padding-left: 2px; color: #222; }
.taskbar .address-box .ico { width: 7px; height: 7px; margin-right: 2px; }
.tray { display: flex; align-items: center; gap: 3px; margin: 0 10px 0 2px; }
.taskbar .tray .ico { width: 7px; height: 7px; }
.tray-clock { width: 24px; line-height: 7px; text-align: center; }
.tray-note { width: 26px; padding-left: 9px; }
.taskbar .tray-note .ico { width: 8px; height: 8px; }

.titlebar { flex: none; display: flex; align-items: center; gap: 2px; height: 10px; margin-top: 1px; background: #f4f3f5; color: #333; font: 5px/8px "Open Sans", sans-serif; }
.titlebar .ico { width: 7px; height: 7px; }
.controls { display: flex; gap: 13px; margin-left: auto; padding-right: 8px; }

.app { flex: 1; display: flex; min-height: 0; }
.content { flex: 1; display: flex; flex-direction: column; min-width: 0; }
.toolbar { flex: none; position: relative; display: flex; align-items: center; height: 21px; padding-bottom: 2px; color: #5c5c5c; }
.tool { position: relative; width: 21px; display: grid; place-items: center; }
.tool.first { width: 41px; padding-right: 18px; }
.tool .ico { width: 10px; height: 10px; }
.badge { position: absolute; top: -3px; right: 1px; padding: 0 2px; background: #d83048; color: #fff; font-size: 6px; line-height: 7px; }
.clock { width: 120px; margin-left: 106px; color: #ddd; text-align: center; font-weight: 500; }
.margins { display: grid; grid-template-columns: 34px 48px 12px; gap: 0 2px; align-items: center; margin-left: auto; padding-right: 2px; text-align: right; color: #999; font-size: 4px; }
.margins > * { white-space: nowrap; }
.meter { height: 2px; background: linear-gradient(90deg, #8cc890 30%, #383838 30%); }
.meter.low { background: linear-gradient(90deg, #bbb 2%, #303030 2%); }

.workspace { flex: 1; display: flex; min-height: 0; }
.charts { flex: 1; min-width: 0; display: flex; flex-direction: column; }
.chart-row { display: flex; min-height: 0; }
.row0 { flex: 333 1 0; }
.row1 { flex: 335 1 0; }
.chart { display: flex; flex-direction: column; min-width: 0; border-bottom: 1px solid #141516; }
.chart-a { flex: 595 1 0; }
.chart-b { flex: 502 1 0; }
.chart-c { flex: 401 1 0; }
.chart-d { flex: 696 1 0; }
.tabs { flex: none; display: flex; align-items: center; height: 12px; color: #3c3c3c; background: #000; }
.tabs .ico { width: 6px; height: 6px; }
.tab { display: flex; align-items: center; gap: 2px; height: 12px; min-width: 49px; padding: 0 3px 0 2px; background: #1c1f21; color: #555; }
.tab b { color: #eee; font-weight: 500; white-space: nowrap; }
.tab > .ico { margin-left: auto; width: 5px; height: 5px; }
.chart-b .tab { min-width: 53px; }
.chart-d .tab { min-width: 58px; }
sup { font-size: 4px; line-height: 0; }
.dot { width: 4px; height: 4px; border-radius: 50%; background: #2e8a3e; }
.tab-add { margin-left: 2px; }
.tab-tools { display: flex; gap: 1px; margin-left: auto; padding-right: 2px; }
.bright { color: #888; }
.bright .tab-tools { gap: 3px; }
.ticket { flex: none; display: flex; gap: 3px; height: 34px; padding: 2px 0; background: #1d2124; }
.position { width: 50px; display: flex; flex-direction: column; align-items: flex-end; line-height: 6px; }
.position small { font-size: 4px; color: #8a8a8a; }
.position strong { font-size: 8px; line-height: 10px; font-weight: 400; color: #fff; }
.position strong i { font-style: normal; color: #4a4e50; }
.position em { font-size: 5px; font-style: normal; color: #42705a; }
.orders { display: grid; grid-template-columns: 30px 31px; grid-template-rows: 12px 12px; gap: 2px; padding-top: 1px; }
.orders button { border-radius: 1px; color: #fff; font-weight: 500; white-space: nowrap; }
.buy { background: #35a050; }
.sell { background: #dc2c46; }
.options { display: flex; flex-direction: column; gap: 3px; }
.opt-row { display: flex; align-items: center; gap: 4px; height: 12px; }
.opt-row.second { gap: 0; }
.qty { display: flex; align-items: center; width: 33px; height: 11px; padding: 0 3px 0 6px; background: #050505; color: #777; }
.qty input { width: 14px; margin-right: 3px; color: #fff; font-weight: 500; }
.qty .ico, .bracket .ico, .action .ico { width: 6px; height: 6px; }
.action { display: flex; align-items: center; justify-content: space-between; gap: 6px; height: 11px; padding: 0 4px; background: #85898d; color: #f4f4f4; font-weight: 500; border-radius: 1px; white-space: nowrap; }
.action .ico { color: #b4b4b4; }
.bracket-label { width: 23px; color: #8a8a8a; font-size: 4px; }
.bracket { display: flex; align-items: center; width: 30px; height: 11px; padding: 0 4px 0 5px; background: #050505; color: #777; }
.bracket select { flex: 1; min-width: 0; appearance: none; color: #fff; font-weight: 500; }
.gear { width: 6px; height: 6px; margin: 0 3px; color: #888; }
.tif { display: flex; height: 9px; background: #0d0e0f; color: #33373a; }
.tif button { width: 16px; line-height: 9px; }
.tif button.on { width: 14px; background: #55595c; color: #fff; font-weight: 500; }

.plot-area { flex: 1; display: flex; min-height: 0; padding-left: 2px; }
.plot { flex: 1; min-width: 0; position: relative; border-right: 1px solid #1c1c1c; }
.canvas { position: absolute; inset: 0; width: 100%; height: 100%; overflow: hidden; }
.canvas line, .canvas polyline { vector-effect: non-scaling-stroke; fill: none; }
.dash { stroke-dasharray: 2 1; }
.up line, .down line { stroke: #7c7c7c; }
.up rect { fill: #3c9c50; }
.down rect { fill: #d8344c; }
.cv { stroke-linejoin: round; }
.dim { stroke: #545454; }
.red { stroke: #641c24; }
.teal { stroke: #2c5250; }
.ice { stroke: #b4d8d0; }
.coral { stroke: #e8905c; stroke-width: 2; }
.olive { stroke: #8e906e; stroke-width: 2; }
.orange { stroke: #e8a858; stroke-width: 1.5; }
.white { stroke: #f4f4f4; stroke-width: 1.5; }
.yellow { stroke: #e2e67c; stroke-width: 1.5; }
.mark { position: absolute; transform: translateY(-50%); font-size: 5px; color: #aaa; }
.order-tag { position: absolute; right: 0; transform: translateY(-50%); padding: 0 3px; background: #3fa650; color: #d4f0d4; font-size: 5px; line-height: 6px; white-space: pre; }
.price-axis { flex: none; position: relative; width: 28px; }
.price { position: absolute; left: 0; right: 2px; transform: translateY(-50%); padding-left: 1px; line-height: 7px; color: #ccc; font-weight: 500; }
.tag.cyan { background: #a4e8f0; color: #7cc4d0; }
.tag.blue { background: #64a8d0; color: #e8f4fc; }
.tag.green { background: #3fa650; color: #c8f0cc; }
.tag.gray { background: #555; color: #ddd; }
.time-axis { flex: none; height: 10px; padding: 0 28px 0 2px; }
.times { position: relative; height: 10px; color: #ccc; font-weight: 500; }
.times span { position: absolute; top: 1px; transform: translateX(-50%); white-space: nowrap; }
.times .time-tag { padding: 0 1px; background: #4c4c4c; color: #ddd; border-radius: 1px; }

.chart-tools { position: absolute; left: 4px; top: 4px; display: flex; gap: 1px; color: #777; }
.chart-tools button, .side-tools button { width: 11px; height: 11px; display: grid; place-items: center; background: #1b1b1bcc; }
.chart-tools button.wide { display: block; width: 18px; margin: 0 2px; }
.chart-tools button:last-child { margin-left: 2px; }
.chart-tools .ico, .side-tools .ico { width: 7px; height: 7px; }
.side-tools { position: absolute; left: 4px; top: 22px; display: flex; flex-direction: column; gap: 7px; color: #555; }
.side-tools .move { color: #fff; }
.cursor { position: absolute; width: 5px; height: 7px; }

.side { flex: none; width: 161px; display: flex; flex-direction: column; padding-left: 1px; }
.positions { flex: none; height: 161px; background: #1e2225; border-bottom: 1px solid #000; }
.positions .tab { width: 60px; }
.chip { margin-left: 6px; width: 13px; height: 7px; background: #111; }
.chip.on { margin-left: 1px; width: auto; padding: 0 1px; background: #666; color: #ddd; font-size: 5px; line-height: 7px; }
.positions table { width: 100%; table-layout: fixed; border-collapse: collapse; }
.positions th { height: 8px; padding: 0; color: #8a8a8a; font-size: 4px; line-height: 8px; font-weight: 400; text-align: right; white-space: nowrap; }
.positions th:first-child { text-align: left; padding-left: 4px; width: 44px; }
.positions th:nth-child(2) { width: 26px; }
.positions th:nth-child(3) { width: 37px; }
.positions th:nth-child(4) { width: 36px; }
.positions td { height: 9px; padding: 0; line-height: 9px; color: #fff; font-weight: 500; text-align: right; white-space: nowrap; }
.positions td:first-child { text-align: left; padding-left: 2px; }
.positions td i { color: #4fc462; font: 7px/8px "DejaVu Sans", sans-serif; padding-right: 2px; }
.positions td.gain { color: #3c8c4c; }
.black { background: #000; }
.performance { flex: 1; display: flex; flex-direction: column; min-height: 0; background: #1d2125; }
.performance .tab { width: 89px; }
.performance .dot { background: #aaa; }
.session { width: 146px; margin: 2px 4px 2px; color: #8a8a8a; font-size: 4px; line-height: 7px; }
.session a { color: #4898d0; text-decoration: none; }
.cards { position: relative; flex: 1; min-height: 0; overflow: hidden; padding: 1px 2px; display: flex; flex-direction: column; align-items: flex-start; gap: 3px; }
.card { flex: none; padding: 5px 2px 2px; background: #050506; }
.card h3 { margin: 0; height: 11px; color: #f0f0f0; font-size: 6px; line-height: 8px; font-weight: 500; text-align: center; text-decoration: underline; }
.card table { width: 100%; border-collapse: collapse; table-layout: fixed; }
.card tr:nth-child(even) { background: #171b1e; }
.card th, .card td { height: 10px; padding: 0; line-height: 10px; white-space: nowrap; }
.card th { color: #8c8c8c; font-weight: 400; text-align: right; }
.card td { padding-left: 2px; color: #f4f4f4; font-weight: 500; }
.card.all { width: 103px; }
.card.profit { width: 144px; }
.card.losing { width: 141px; }
.card.versus { width: 137px; height: 97px; }
.all th { width: 60px; }
.profit th { width: 75px; }
.losing th { width: 72px; }
.hint { margin: 0 0 8px; color: #8a8a8a; font-size: 4px; line-height: 8px; text-align: center; white-space: nowrap; }
.share { display: flex; justify-content: space-between; padding: 0 4px; }
.pie { width: 62px; height: 62px; }
.share ul { list-style: none; margin: 0; padding: 0; text-align: right; font-size: 4px; line-height: 7px; color: #999; white-space: nowrap; }
.share .win { color: #3fa650; }
.share .lose { color: #d8344c; }
.scroll-x { position: absolute; left: 0; bottom: 4px; width: 149px; height: 2px; background: #55585c; }
.scroll-y { position: absolute; right: 3px; top: 0; width: 2px; height: 180px; background: #444a54; }

.rail { flex: none; display: flex; flex-direction: column; width: 22px; align-items: stretch; color: #777; }
.rail-items { display: flex; flex-direction: column; height: 156px; }
.rail-items button { position: relative; flex: 1; display: grid; place-items: center; }
.rail-items .ico { width: 11px; height: 11px; }
.rail-items .badge { top: 0; right: 2px; }
.rail-items .globe .badge { padding: 0; }
.rail-items .ladder .ico { width: 8px; height: 8px; }
.help-tab { display: flex; align-items: center; justify-content: space-between; align-self: flex-end; width: 18px; height: 78px; margin: auto 0 41px; padding: 4px 3px; writing-mode: vertical-rl; background: #5a5a5c; border-right: 2px solid #4a90b0; border-radius: 2px 0 0 2px; color: #fff; font-size: 7px; font-weight: 700; }
.help-tab .ico { width: 6px; height: 6px; transform: rotate(90deg); }
</style>
